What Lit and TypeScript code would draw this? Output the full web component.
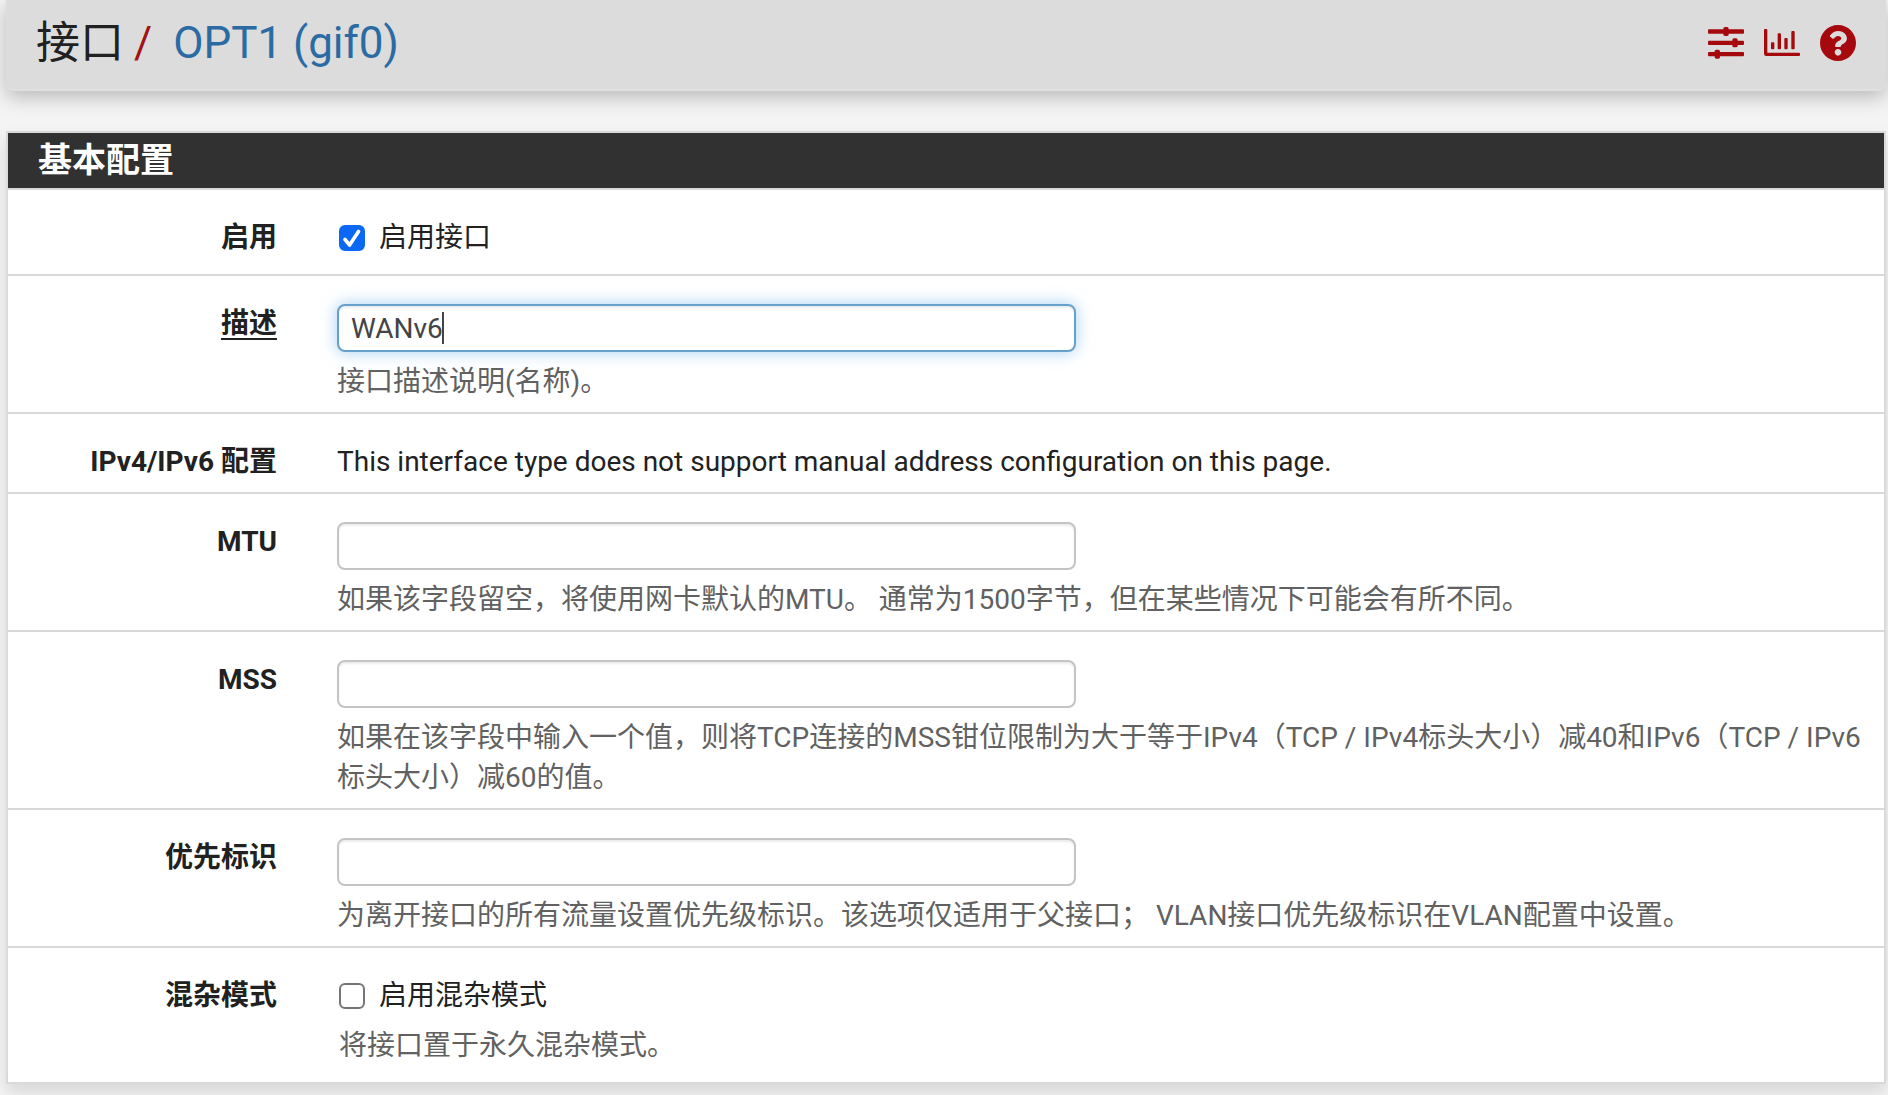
import { LitElement, html, css, svg, nothing } from "lit";
import { customElement, property } from "lit/decorators.js";

const slidersIcon = svg`
  <svg viewBox="0 0 108 108" width="36" height="36" fill="currentColor" aria-hidden="true">
    <rect x="0" y="13" width="108" height="13" rx="3" />
    <rect x="0" y="47" width="108" height="13" rx="3" />
    <rect x="0" y="81" width="108" height="13" rx="3" />
    <rect x="46" y="6" width="16" height="27" rx="5" />
    <rect x="73" y="40" width="16" height="27" rx="5" />
    <rect x="20" y="74" width="16" height="27" rx="5" />
  </svg>`;

const chartIcon = svg`
  <svg viewBox="0 0 108 108" width="36" height="36" fill="currentColor" aria-hidden="true">
    <path d="M3 12h4a3 3 0 0 1 3 3V83h95a3 3 0 0 1 3 3v4a3 3 0 0 1-3 3H7a7 7 0 0 1-7-7V15a3 3 0 0 1 3-3z" />
    <rect x="21" y="52" width="10" height="21" rx="3" />
    <rect x="41" y="25" width="10" height="48" rx="3" />
    <rect x="61" y="39" width="10" height="34" rx="3" />
    <rect x="82" y="18" width="10" height="55" rx="3" />
  </svg>`;

const helpIcon = svg`
  <svg viewBox="8 8 496 496" width="36" height="36" fill="currentColor" aria-hidden="true">
    <path d="M504 256c0 136.997-111.043 248-248 248S8 392.997 8 256C8 119.083 119.043 8 256 8s248 111.083 248 248zM262.655 90c-54.497 0-89.255 22.957-116.549 63.758-3.536 5.286-2.353 12.415 2.715 16.258l34.699 26.31c5.205 3.947 12.621 3.008 16.665-2.122 17.864-22.658 30.113-35.797 57.303-35.797 20.429 0 45.698 13.148 45.698 32.958 0 14.976-12.363 22.667-32.534 33.976C247.128 238.528 216 254.941 216 296v4c0 6.627 5.373 12 12 12h56c6.627 0 12-5.373 12-12v-1.333c0-28.462 83.186-29.647 83.186-106.667 0-58.002-60.165-102-116.531-102zM256 338c-25.365 0-46 20.635-46 46 0 25.364 20.635 46 46 46s46-20.636 46-46c0-25.364-20.635-46-46-46z" />
  </svg>`;

@customElement("page-header")
export class PageHeader extends LitElement {
  static styles = css`
    :host { display: block; }
    .bar {
      display: flex;
      align-items: center;
      justify-content: space-between;
      margin: 0 2px 0 6px;
      padding: 12px 30px 15px;
      background: #dcdcdc;
      border-bottom: 2px solid #e0e0e0;
      border-radius: 0 0 8px 8px;
      box-shadow: 0 6px 20px rgba(0, 0, 0, 0.25);
    }
    .trail {
      display: flex;
      margin: 0;
      padding: 0;
      list-style: none;
      font-size: 44px;
      line-height: 62px;
      color: #212121;
    }
    .slash { padding: 0 21px 0 10px; color: #a01217; }
    .trail a { color: #2a6ba3; text-decoration: none; }
    .tools { display: flex; gap: 20px; }
    .tools a { display: flex; color: #a5090e; }
  `;

  render() {
    return html`
      <header class="bar">
        <ol class="trail">
          <li>接口</li>
          <li class="slash" aria-hidden="true">/</li>
          <li><a href="#gif0">OPT1 (gif0)</a></li>
        </ol>
        <nav class="tools">
          <a href="#settings" aria-label="设置">${slidersIcon}</a>
          <a href="#status" aria-label="状态">${chartIcon}</a>
          <a href="#help" aria-label="帮助">${helpIcon}</a>
        </nav>
      </header>
    `;
  }
}

interface Field {
  id: string;
  label: string;
  kind: "check" | "text" | "static";
  required?: boolean;
  active?: boolean;
  checked?: boolean;
  value?: string;
  caption?: string;
  help?: string;
}

const fields: Field[] = [
  { id: "enable", label: "启用", kind: "check", checked: true, caption: "启用接口" },
  { id: "descr", label: "描述", kind: "text", required: true, active: true, value: "WANv6", help: "接口描述说明(名称)。" },
  { id: "address", label: "IPv4/IPv6 配置", kind: "static", caption: "This interface type does not support manual address configuration on this page." },
  { id: "mtu", label: "MTU", kind: "text", help: "如果该字段留空，将使用网卡默认的MTU。 通常为1500字节，但在某些情况下可能会有所不同。" },
  { id: "mss", label: "MSS", kind: "text", help: "如果在该字段中输入一个值，则将TCP连接的MSS钳位限制为大于等于IPv4（TCP / IPv4标头大小）减40和IPv6（TCP / IPv6标头大小）减60的值。" },
  { id: "priority", label: "优先标识", kind: "text", help: "为离开接口的所有流量设置优先级标识。该选项仅适用于父接口； VLAN接口优先级标识在VLAN配置中设置。" },
  { id: "promisc", label: "混杂模式", kind: "check", caption: "启用混杂模式", help: "将接口置于永久混杂模式。" },
];

@customElement("form-row")
export class FormRow extends LitElement {
  @property({ attribute: false }) field!: Field;

  static styles = css`
    :host { display: block; }
    .row {
      display: grid;
      grid-template-columns: 269px minmax(0, 1fr);
      column-gap: 60px;
      padding: 28px 8px 10px 0;
      color: #212121;
      line-height: 40px;
    }
    .row.check { padding-bottom: 16px; }
    .label { text-align: right; font-weight: 700; }
    .required { text-decoration: underline; text-decoration-thickness: 2px; text-underline-offset: 5px; }
    .entry {
      display: block;
      box-sizing: border-box;
      width: 48%;
      height: 48px;
      padding: 0 12px;
      border: 2px solid #c4c4c4;
      border-radius: 8px;
      background: #fff;
      box-shadow: inset 0 2px 2px rgba(0, 0, 0, 0.075);
      color: #444;
      font: inherit;
      outline: none;
    }
    .entry.active {
      border-color: #66a0cc;
      background: linear-gradient(#444, #444) 103px center / 2px 32px no-repeat #fff;
      box-shadow: inset 0 2px 2px rgba(0, 0, 0, 0.075), 0 0 16px rgba(102, 175, 233, 0.6);
    }
    .option { display: flex; align-items: center; gap: 14px; width: fit-content; }
    .check .option, .check .help { padding-left: 2px; }
    .mark { display: grid; }
    .mark > * { grid-area: 1 / 1; }
    .box {
      appearance: none;
      box-sizing: border-box;
      width: 26px;
      height: 26px;
      margin: 0;
      border: 2px solid #757575;
      border-radius: 6px;
      background: #fff;
    }
    .box:checked { border-color: #0a68f5; background: #0a68f5; }
    .tick { display: none; pointer-events: none; }
    .box:checked + .tick { display: block; }
    .help { margin: 10px 0 0; color: #616161; line-height: 40px; }
  `;

  private control(f: Field) {
    if (f.kind === "check") {
      return html`
        <label class="option">
          <span class="mark">
            <input class="box" id=${f.id} type="checkbox" .checked=${f.checked ?? false} />
            <svg class="tick" viewBox="0 0 26 26" width="26" height="26" fill="none" aria-hidden="true">
              <path d="M6 14.5l4.6 5.5L19.5 6.5" stroke="#fff" stroke-width="3.6" stroke-linecap="round" stroke-linejoin="round" />
            </svg>
          </span>
          <span>${f.caption}</span>
        </label>`;
    }
    if (f.kind === "text") {
      return html`<input class="entry ${f.active ? "active" : ""}" id=${f.id} type="text" .value=${f.value ?? ""} />`;
    }
    return html`<span>${f.caption}</span>`;
  }

  render() {
    const f = this.field;
    const name = html`<span class=${f.required ? "required" : ""}>${f.label}</span>`;
    return html`
      <div class="row ${f.kind}">
        ${f.kind === "static"
          ? html`<div class="label">${name}</div>`
          : html`<label class="label" for=${f.id}>${name}</label>`}
        <div>
          ${this.control(f)}
          ${f.help ? html`<p class="help">${f.help}</p>` : nothing}
        </div>
      </div>
    `;
  }
}

@customElement("app-root")
export class AppRoot extends LitElement {
  static styles = css`
    :host {
      display: block;
      min-height: 100vh;
      overflow: hidden;
      background: #f4f4f4;
      font-family: Roboto, "Noto Sans CJK SC", sans-serif;
      font-size: 28px;
    }
    .panel {
      margin: 40px 2px 10px 6px;
      border: 2px solid #d9d9d9;
      background: #fff;
      box-shadow: 0 8px 16px rgba(0, 0, 0, 0.12);
    }
    .heading {
      margin: 0;
      padding: 0 30px;
      background: #313131;
      color: #fff;
      font-size: 34px;
      font-weight: 700;
      line-height: 55px;
    }
    form-row { border-top: 2px solid #d9d9d9; }
  `;

  render() {
    return html`
      <page-header></page-header>
      <section class="panel">
        <h2 class="heading">基本配置</h2>
        <form>${fields.map((f) => html`<form-row .field=${f}></form-row>`)}</form>
      </section>
    `;
  }
}
